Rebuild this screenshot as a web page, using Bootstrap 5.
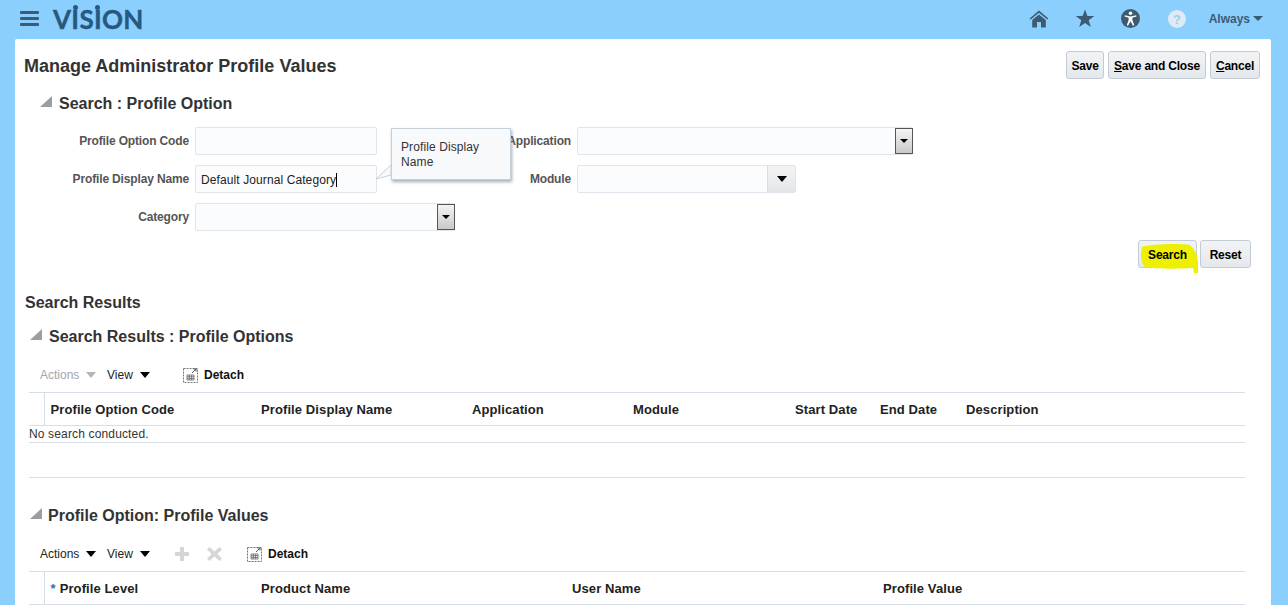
<!DOCTYPE html>
<html lang="en">
<head>
<meta charset="utf-8">
<title>Manage Administrator Profile Values</title>
<link href="https://cdn.jsdelivr.net/npm/bootstrap@5.3.0/dist/css/bootstrap.min.css" rel="stylesheet">
<style>
html,body{height:605px;overflow:hidden}
body{background:#8bcfff;font-family:"Liberation Sans",Arial,sans-serif;font-size:12px;color:#000}
.top-bar{height:39px;padding:0 0 0 20px}
.burger{width:19px;height:15px;margin-bottom:2px;display:flex;flex-direction:column;justify-content:space-between}
.burger i{display:block;height:3px;background:#3b5c74;border-radius:1px}
.brand{font-family:Lato,"Liberation Sans",sans-serif;font-weight:700;font-size:26px;line-height:27px;color:#27587f;margin-left:14px;letter-spacing:.3px;-webkit-text-stroke:.4px #27587f}
.dotted{position:relative;display:inline-block}
.dotted::before{content:"";position:absolute;left:50%;top:-1px;width:5px;height:5px;margin-left:-2.5px;border-radius:50%;background:#27587f}
.top-icons{margin-left:auto;padding-right:25px;margin-bottom:2px}
.ico-slot{display:flex;justify-content:center;align-items:center;width:20px}
.ico-gap{margin-left:26px}
.always{color:#3d5b70;font-weight:700;font-size:12px;margin-left:22px;display:flex;align-items:center;gap:3px}
.caret-d{width:0;height:0;border-left:5px solid transparent;border-right:5px solid transparent;border-top:5px solid #3d5b70;display:inline-block}
.sheet{background:#fff;margin-left:15px;width:1256px;height:566px;border-radius:2px 2px 0 0;padding:12px 11px 0 9px;overflow:hidden}
.page-title{font-size:18px;font-weight:700;color:#333;margin:0;line-height:30px;height:28px}
.ora-btn{--bs-btn-padding-x:0;--bs-btn-padding-y:0;--bs-btn-font-size:12px;--bs-btn-font-weight:700;--bs-btn-line-height:26px;--bs-btn-color:#000;--bs-btn-bg:#eceef0;--bs-btn-border-color:#c3ccd4;--bs-btn-border-radius:3px;--bs-btn-hover-bg:#e4e8eb;--bs-btn-hover-border-color:#c3ccd4;height:28px;background:linear-gradient(#f2f3f5,#e5e8eb);letter-spacing:-.2px;padding-top:1px}
.w38{width:38px}.w98{width:98px}.w50{width:50px}.w51{width:51px}.w59{width:59px}
.sec-head{display:flex;align-items:center;height:20px;padding-top:2px;font-size:16px;font-weight:700;color:#333;margin:0}
.sec-one{margin-top:14px;padding-left:16px}
.sec-two{margin-top:13px;padding-left:6px}
.sec-three{margin-top:0;padding-left:6px}
.tri{width:12px;height:11px;margin-right:7px;flex:none;margin-top:-5px}
.sec-three .tri{margin-right:6px}
.form-area{margin-top:14px;display:grid;grid-template-columns:165px 182px 188px 1fr;column-gap:6px;row-gap:10px;position:relative}
.lbl{font-weight:700;color:#555;text-align:right;line-height:28px;white-space:nowrap;letter-spacing:-.15px}
.txt-in{height:28px;border:1px solid #dfe5ea;border-radius:2px;background:#fbfcfe;padding:2px 5px 0;font-size:12px;color:#222;display:flex;align-items:center;letter-spacing:.1px}
.cursor{display:inline-block;width:1px;height:14px;background:#000}
.combo{justify-content:flex-end;padding:0}
.combo-a{width:260px;grid-column:2 / span 2}
.combo-b{width:336px}
.combo-c{width:219px}
.drop-old{width:18px;height:26px;border:1px solid #555;background:linear-gradient(#f4f4f4,#c9c9c9);display:flex;align-items:center;justify-content:center;flex:none;margin:0 -1px 0 0}
.drop-old::after{content:"";border-left:4px solid transparent;border-right:4px solid transparent;border-top:4px solid #000}
.drop-new{width:28px;height:26px;border-left:1px solid #d6dde3;background:linear-gradient(#f2f3f5,#e4e7ea);display:flex;align-items:center;justify-content:center;flex:none}
.drop-new::after{content:"";border-left:5px solid transparent;border-right:5px solid transparent;border-top:6px solid #000}
.tip{position:absolute;left:367px;top:1px;width:120px;height:52px;background:#f8f9fa;border:1px solid #c5d0d9;box-shadow:1px 2px 3px rgba(90,110,130,.55);padding:11px 9px;line-height:15px;color:#333;font-size:12px;z-index:2;letter-spacing:.1px}
.tip-arrow{position:absolute;left:352px;top:37px;z-index:3;width:16px;height:16px}
.form-actions{margin-top:9px;padding-right:9px;gap:3px}
.hl{position:relative;isolation:isolate}
.hl svg{position:absolute;left:1px;top:2px;z-index:-1;overflow:visible}
.group-title{font-size:16px;font-weight:700;color:#333;margin:25px 0 0 1px;line-height:20px}
.tbl-wrap{margin-left:5px;width:1216px}
.tools{height:26px;display:flex;align-items:center;margin-top:16px;font-size:12px;color:#222}
.t-item{display:flex;align-items:center}
.act-item{width:78px;padding-left:11px}
.view-a{width:76px}
.view-b{width:68px}
.x-ico{margin-left:18px}
.t-detach-b{margin-left:25px}
.t-off{color:#a3a6a9}
.mini-caret{width:0;height:0;border-left:5px solid transparent;border-right:5px solid transparent;border-top:6px solid #000;margin-left:7px}
.t-off .mini-caret{border-top-color:#b3b6b9}
.detach{font-weight:700;color:#111}
.detach svg{margin-right:5px}
.data-tbl{width:1216px;table-layout:fixed;margin:4px 0 0;border-collapse:collapse;border-top:1px solid #d6dfe7}
.data-tbl th{font-size:13px;letter-spacing:.1px;font-weight:700;color:#222;padding:1px 0 0 6px;height:33px;vertical-align:middle;border-bottom:1px solid #d6dfe7;white-space:nowrap}
.data-tbl th.gut{padding:0;border-right:1px solid #d6dfe7}
.data-tbl td{padding:0;height:17px;line-height:16px;font-size:12px;color:#333;border-bottom:1px solid #d6dfe7;letter-spacing:.15px}
.star{color:#1f77b8;font-size:13px;font-weight:700;vertical-align:top;margin-right:4px}
.rule{height:1px;background:#d6dfe7;margin:34px 0 27px;border:0;opacity:1}
.u{text-decoration:underline}
</style>
</head>
<body>
<header class="top-bar d-flex align-items-center">
  <div class="burger" aria-label="Menu"><i></i><i></i><i></i></div>
  <div class="brand">V<span class="dotted">I</span>S<span class="dotted">I</span>ON</div>
  <div class="top-icons d-flex align-items-center">
    <span class="ico-slot"><svg width="20" height="18" viewBox="0 0 20 18"><path d="M10 0.5 0.6 8.4 1.7 9.6 10 2.7 18.3 9.6 19.4 8.4Z" fill="#3d5b70"/><path d="M3.2 10 10 4.4 16.800 10V17.500H12V12H8V17.500H3.200Z" fill="#3d5b70"/></svg></span>
    <span class="ico-slot ico-gap"><svg width="20" height="19" viewBox="0 0 20 19"><path d="M10 .5 12.400 7H19.300L13.700 11.200 15.800 18 10 14 4.200 18 6.300 11.200 .7 7H7.600Z" fill="#3d5b70"/></svg></span>
    <span class="ico-slot ico-gap"><svg width="19" height="19" viewBox="0 0 19 19"><circle cx="9.500" cy="9.500" r="9.500" fill="#3d5b70"/><circle cx="9.500" cy="4.300" r="1.800" fill="#fff"/><path d="M3.800 6.300 9.500 7.400 15.200 6.300 15.500 7.500 11.300 8.700 11.500 11.500 13.300 16.300 12 16.800 9.500 12.300 7 16.800 5.700 16.300 7.500 11.500 7.700 8.700 3.500 7.500Z" fill="#fff"/></svg></span>
    <span class="ico-slot ico-gap"><svg width="18" height="18" viewBox="0 0 18 18"><circle cx="9" cy="9" r="9" fill="#deeaf5"/><text x="9" y="13.500" text-anchor="middle" font-family="Liberation Sans" font-weight="700" font-size="13" fill="#a9cdea">?</text></svg></span>
    <span class="always">Always <span class="caret-d"></span></span>
  </div>
</header>

<main class="sheet">
  <div class="d-flex justify-content-between">
    <h1 class="page-title">Manage Administrator Profile Values</h1>
    <div class="d-flex gap-1">
      <button class="btn ora-btn w38">Save</button>
      <button class="btn ora-btn w98"><span class="u">S</span>ave and Close</button>
      <button class="btn ora-btn w50"><span class="u">C</span>ancel</button>
    </div>
  </div>

  <h2 class="sec-head sec-one"><svg class="tri" viewBox="0 0 12 11"><path d="M12 0V11H0Z" fill="#9a9ea3"/></svg>Search : Profile Option</h2>

  <div class="form-area">
    <div class="lbl">Profile Option Code</div>
    <div class="txt-in"></div>
    <div class="lbl">Application</div>
    <div class="txt-in combo combo-b"><span class="drop-old"></span></div>

    <div class="lbl">Profile Display Name</div>
    <div class="txt-in">Default Journal Category<span class="cursor"></span></div>
    <div class="lbl">Module</div>
    <div class="txt-in combo combo-c"><span class="drop-new"></span></div>

    <div class="lbl">Category</div>
    <div class="txt-in combo combo-a"><span class="drop-old"></span></div>

    <svg class="tip-arrow" viewBox="0 0 16 16"><path d="M0 15 15 1V11Z" fill="#f8f9fa" stroke="#c5d0d9"/></svg>
    <div class="tip">Profile Display Name</div>
  </div>

  <div class="form-actions d-flex justify-content-end">
    <button class="btn ora-btn w59 hl"><svg width="58" height="30" viewBox="0 0 58 30"><path d="M2 4C10 1 38 0 50 2 55 7 58 14 58 19V30H54L53 25C40 26 12 26 5 24 1 20 0 10 2 4Z" fill="#eef000"/></svg>Search</button>
    <button class="btn ora-btn w51">Reset</button>
  </div>

  <div class="group-title">Search Results</div>
  <h2 class="sec-head sec-two"><svg class="tri" viewBox="0 0 12 11"><path d="M12 0V11H0Z" fill="#9a9ea3"/></svg>Search Results : Profile Options</h2>

  <section class="tbl-wrap">
    <div class="tools">
      <span class="t-item t-off act-item">Actions<span class="mini-caret"></span></span>
      <span class="t-item view-a">View<span class="mini-caret"></span></span>
      <span class="t-item detach"><svg width="16" height="16" viewBox="0 0 16 16"><rect x=".5" y="1.500" width="14" height="14" fill="none" stroke="#777" stroke-dasharray="2 1"/><path d="M4 8H11V13H4ZM4 9.700H11M4 11.400H11M6.300 8V13M8.600 8V13" fill="none" stroke="#666" stroke-width=".8"/><path d="M9 6 13 2M10.500 2H13V4.500" fill="none" stroke="#555"/></svg>Detach</span>
    </div>
    <table class="data-tbl">
      <colgroup><col style="width:15px"><col style="width:211px"><col style="width:211px"><col style="width:161px"><col style="width:162px"><col style="width:85px"><col style="width:86px"><col></colgroup>
      <thead><tr><th class="gut"></th><th>Profile Option Code</th><th>Profile Display Name</th><th>Application</th><th>Module</th><th>Start Date</th><th>End Date</th><th>Description</th></tr></thead>
      <tbody><tr><td colspan="8">No search conducted.</td></tr></tbody>
    </table>
    <hr class="rule">
  </section>

  <h2 class="sec-head sec-three"><svg class="tri" viewBox="0 0 12 11"><path d="M12 0V11H0Z" fill="#9a9ea3"/></svg>Profile Option: Profile Values</h2>

  <section class="tbl-wrap">
    <div class="tools">
      <span class="t-item act-item">Actions<span class="mini-caret"></span></span>
      <span class="t-item view-b">View<span class="mini-caret"></span></span>
      <svg width="14" height="14" viewBox="0 0 14 14"><path d="M5 0H9V5H14V9H9V14H5V9H0V5H5Z" fill="#d4d6d8"/></svg>
      <svg class="x-ico" width="15" height="14" viewBox="0 0 15 14"><path d="M2.500 0 7.500 4.500 12.500 0 15 2.500 10.300 7 15 11.500 12.500 14 7.500 9.500 2.500 14 0 11.500 4.700 7 0 2.500Z" fill="#d4d6d8"/></svg>
      <span class="t-item detach t-detach-b"><svg width="16" height="16" viewBox="0 0 16 16"><rect x=".5" y="1.500" width="14" height="14" fill="none" stroke="#777" stroke-dasharray="2 1"/><path d="M4 8H11V13H4ZM4 9.700H11M4 11.400H11M6.300 8V13M8.600 8V13" fill="none" stroke="#666" stroke-width=".8"/><path d="M9 6 13 2M10.500 2H13V4.500" fill="none" stroke="#555"/></svg>Detach</span>
    </div>
    <table class="data-tbl">
      <colgroup><col style="width:15px"><col style="width:211px"><col style="width:311px"><col style="width:311px"><col></colgroup>
      <thead><tr><th class="gut"></th><th><span class="star">*</span>Profile Level</th><th>Product Name</th><th>User Name</th><th>Profile Value</th></tr></thead>
    </table>
  </section>
</main>
<script src="https://cdn.jsdelivr.net/npm/bootstrap@5.3.0/dist/js/bootstrap.bundle.min.js"></script>
</body>
</html>
